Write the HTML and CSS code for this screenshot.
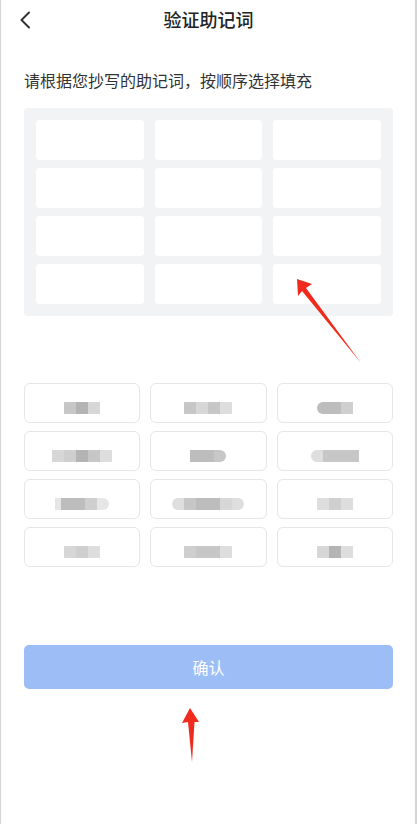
FILE: index.html
```html
<!DOCTYPE html>
<html lang="zh-CN">
  <head>
    <meta charset="utf-8" />
    <title>验证助记词</title>
    <link rel="stylesheet" href="styles.css">
  </head>
  <body>
    <div class="page">
      <div class="header">
        <span class="back">
          <svg width="12" height="18" viewBox="0 0 12 18"><path d="M10 1.5 L2.5 9 L10 16.5" fill="none" stroke="#333" stroke-width="2" stroke-linecap="round" stroke-linejoin="round"/></svg>
        </span>
        <div class="title">验证助记词</div>
        <span></span>
      </div>

      <div class="tip">请根据您抄写的助记词，按顺序选择填充</div>

      <div class="slots">
        <div class="slot"></div><div class="slot"></div><div class="slot"></div>
        <div class="slot"></div><div class="slot"></div><div class="slot"></div>
        <div class="slot"></div><div class="slot"></div><div class="slot"></div>
        <div class="slot"></div><div class="slot"></div><div class="slot"></div>
      </div>

      <div class="words">
        <div class="word"><div class="mosaic"><i class="g3"></i><i class="g1"></i><i class="g5"></i></div></div>
        <div class="word"><div class="mosaic"><i class="g3"></i><i class="g5"></i><i class="g3"></i><i class="g6"></i></div></div>
        <div class="word"><div class="mosaic"><i class="g2 rl"></i><i class="g2"></i><i class="g4"></i></div></div>

        <div class="word"><div class="mosaic"><i class="g5"></i><i class="g4"></i><i class="g1"></i><i class="g3"></i><i class="g6"></i></div></div>
        <div class="word"><div class="mosaic"><i class="g2"></i><i class="g2"></i><i class="g3 rr"></i></div></div>
        <div class="word"><div class="mosaic"><i class="g6 rl"></i><i class="g3"></i><i class="g3"></i><i class="g3"></i></div></div>

        <div class="word"><div class="mosaic"><i class="g7 half"></i><i class="g2"></i><i class="g2"></i><i class="g4"></i><i class="g7 rr"></i></div></div>
        <div class="word"><div class="mosaic"><i class="g6 rl"></i><i class="g3"></i><i class="g2"></i><i class="g2"></i><i class="g5"></i><i class="g6 rr"></i></div></div>
        <div class="word"><div class="mosaic"><i class="g6"></i><i class="g4"></i><i class="g6"></i></div></div>

        <div class="word"><div class="mosaic"><i class="g5"></i><i class="g4"></i><i class="g6"></i></div></div>
        <div class="word"><div class="mosaic"><i class="g4"></i><i class="g3"></i><i class="g3"></i><i class="g6"></i></div></div>
        <div class="word"><div class="mosaic"><i class="g5"></i><i class="g1"></i><i class="g6"></i></div></div>
      </div>

      <button class="confirm">确认</button>

      <svg class="marks" width="417" height="824" viewBox="0 0 417 824">
        <polygon points="297,279 312,284 306,288 361,363 302,291 298,296" fill="#f02a1c"/>
        <polygon points="190,708 199,722 194.5,722 192,762 188,722 182,723" fill="#f02a1c"/>
      </svg>
    </div>
  </body>
</html>
```

FILE: styles.css
```css
body {
  margin: 0;
  background-color: #fff;
  font-family: "Noto Sans CJK SC", "Noto Sans", sans-serif;
  color: #222;
}
.page {
  position: relative;
  width: 417px;
  height: 824px;
  box-sizing: border-box;
  overflow: hidden;
  background-color: #fff;
  box-shadow: inset 1px 0 #d4d4d4, inset -2px 0 #d4d4d4;
}
.header {
  display: grid;
  grid-template-columns: 60px 1fr 60px;
  align-items: center;
  height: 38px;
}
.back {
  display: flex;
  padding-left: 19px;
  padding-top: 1px;
}
.title {
  text-align: center;
  font-size: 18px;
  font-weight: 500;
  line-height: 24px;
  color: #222;
}
.tip {
  margin: 31px 24px 0 24px;
  font-size: 16px;
  line-height: 22px;
  color: #333;
}
.slots {
  margin: 17px 24px 0 24px;
  padding: 12px;
  display: grid;
  grid-template-columns: repeat(3, 1fr);
  column-gap: 11px;
  row-gap: 8px;
  background-color: #f1f3f5;
  border-radius: 4px;
}
.slot {
  height: 40px;
  background-color: #fff;
  border-radius: 4px;
}
.words {
  margin: 67px 24px 0 24px;
  display: grid;
  grid-template-columns: repeat(3, 1fr);
  column-gap: 10px;
  row-gap: 8px;
}
.word {
  height: 40px;
  box-sizing: border-box;
  border: 1px solid #e6e6e6;
  border-radius: 6px;
  display: flex;
  align-items: center;
  justify-content: center;
}
.mosaic {
  display: flex;
  margin-top: 10px;
  filter: blur(0.5px);
}
.mosaic i {
  display: block;
  width: 12px;
  height: 12px;
}
.mosaic i.half { width: 6px; }
.mosaic i.rl { border-radius: 6px 0 0 6px; }
.mosaic i.rr { border-radius: 0 6px 6px 0; }
.g1 { background-color: #b4b4b4; }
.g2 { background-color: #bdbdbd; }
.g3 { background-color: #c7c7c7; }
.g4 { background-color: #cfcfcf; }
.g5 { background-color: #d7d7d7; }
.g6 { background-color: #dedede; }
.g7 { background-color: #e6e6e6; }
.confirm {
  display: block;
  width: 369px;
  height: 44px;
  margin: 78px 24px 0 24px;
  border: none;
  border-radius: 5px;
  background-color: #9dbdf7;
  color: #fff;
  font-family: "Noto Sans CJK SC", sans-serif;
  font-size: 16px;
}
.marks {
  position: absolute;
  top: 0;
  left: 0;
  pointer-events: none;
}
```
